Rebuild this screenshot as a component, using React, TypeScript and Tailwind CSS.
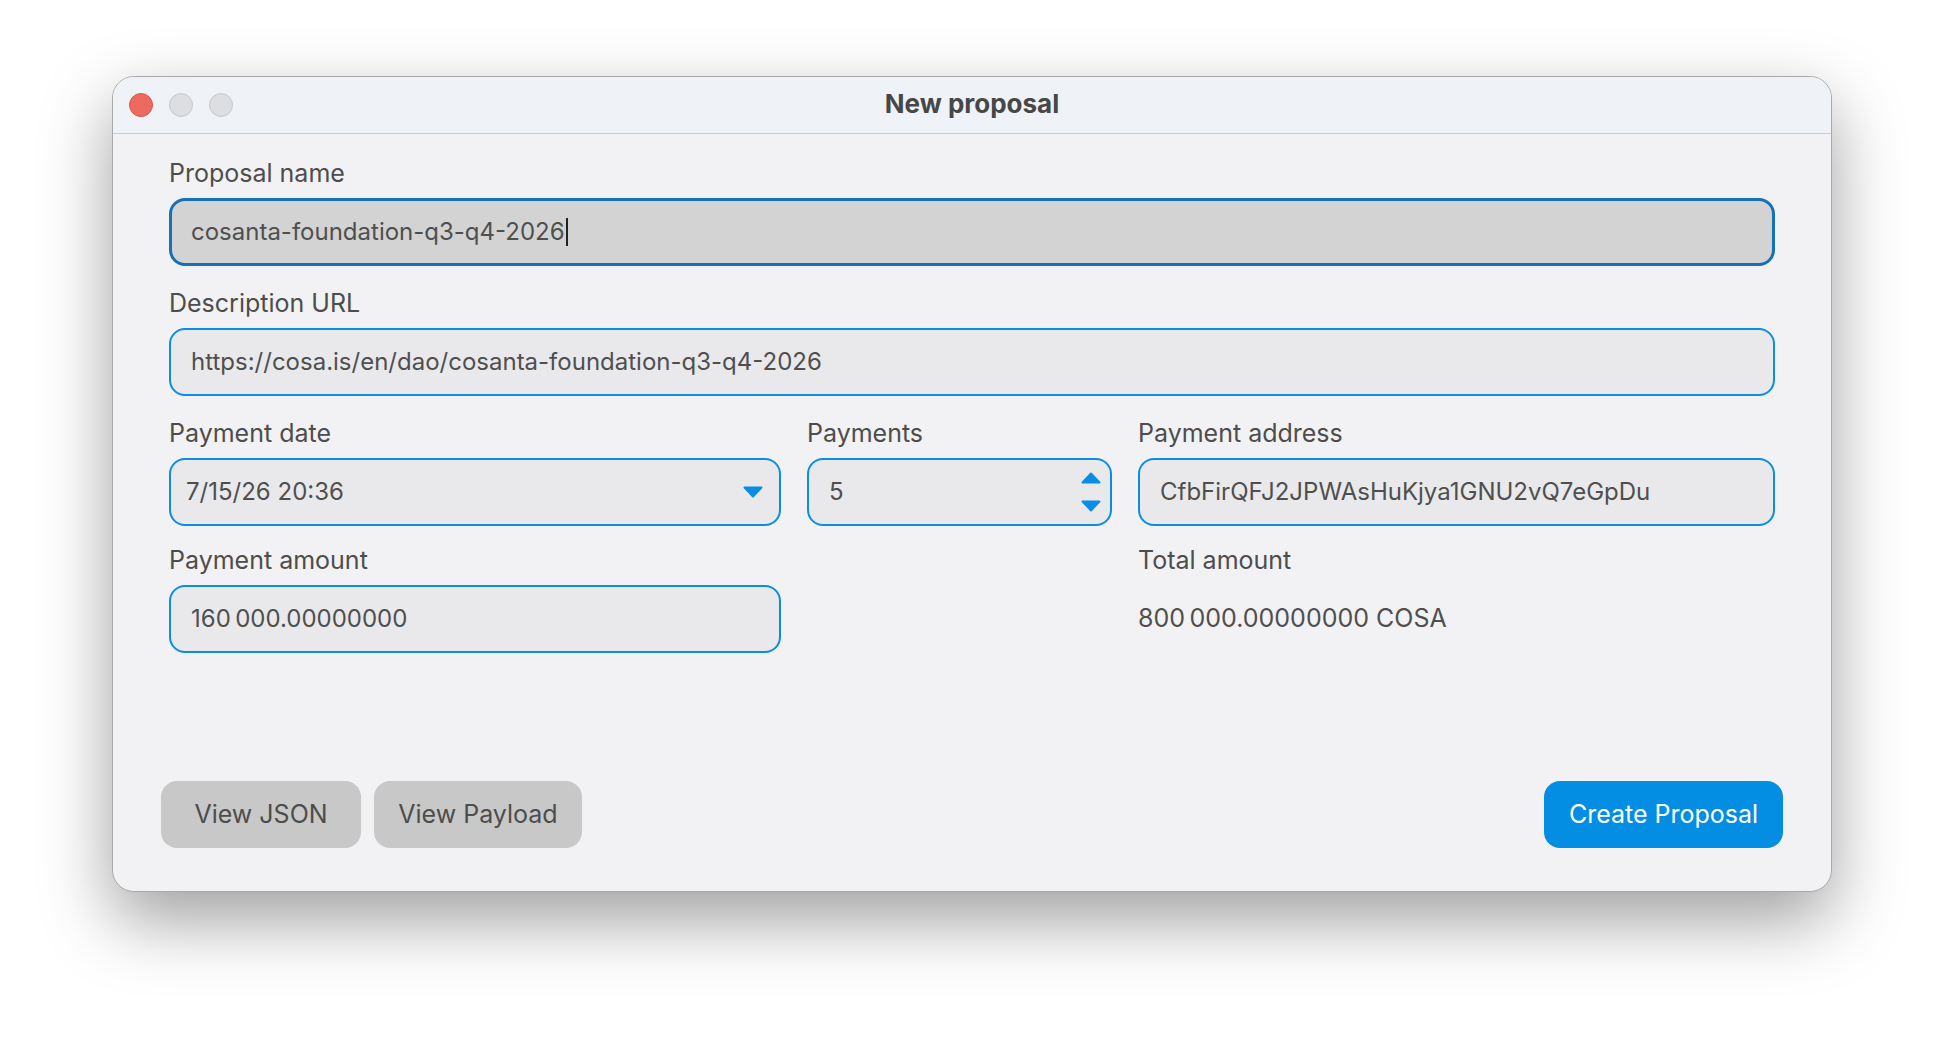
import React from "react";

const font = { fontFamily: "Inter, 'Noto Sans', sans-serif" };

function Label({ children }: { children: React.ReactNode }) {
  return (
    <div className="h-[30px] text-[25px] leading-[30px] text-[#4d4d4d]">
      {children}
    </div>
  );
}

function Field({
  value,
  className = "",
  children,
}: {
  value: string;
  className?: string;
  children?: React.ReactNode;
}) {
  return (
    <div
      className={`mt-[10px] flex h-[68px] items-center rounded-[16px] border-2 border-[#0a8ee4] bg-[#e9e9eb] text-[24px] text-[#4f4f4f] ${className}`}
    >
      <span className="flex-1">{value}</span>
      {children}
    </div>
  );
}

function Triangle({ up = false }: { up?: boolean }) {
  return (
    <svg width="20" height="12" viewBox="0 0 20 12">
      <path
        d={up ? "M10 1.5 L18.5 10.5 L1.5 10.5 Z" : "M1.5 1.5 L18.5 1.5 L10 10.5 Z"}
        fill="#0a8ee4"
        stroke="#0a8ee4"
        strokeWidth="2"
        strokeLinejoin="round"
      />
    </svg>
  );
}

export default function App() {
  return (
    <div className="min-h-[1040px] bg-white pl-[112px] pt-[76px]" style={font}>
      <div className="flex h-[816px] w-[1720px] flex-col overflow-hidden rounded-[22px] border border-[#a9a9a9] bg-[#f2f2f4] shadow-[0_28px_70px_rgba(0,0,0,0.38)]">
        {/* title bar */}
        <div className="relative flex h-[57px] shrink-0 items-center border-b border-[#cdcdcd] bg-[#eff3f7]">
          <div className="flex gap-[16px] pl-[16px]">
            <span className="h-[24px] w-[24px] rounded-full border border-[#d9584c] bg-[#ee6a5e]" />
            <span className="h-[24px] w-[24px] rounded-full border border-[#c5c8cc] bg-[#dcdee1]" />
            <span className="h-[24px] w-[24px] rounded-full border border-[#c5c8cc] bg-[#dcdee1]" />
          </div>
          <div className="absolute inset-0 flex items-center justify-center pb-[4px] text-[26px] font-bold text-[#474747]">
            New proposal
          </div>
        </div>

        {/* form */}
        <div className="flex flex-1 flex-col px-[56px] pt-[24px]">
          <Label>Proposal name</Label>
          <div className="mt-[10px] flex h-[68px] items-center rounded-[16px] border-[3px] border-[#1570b8] bg-[#d3d3d3] pl-[19px] text-[24px] text-[#4f4f4f]">
            cosanta-foundation-q3-q4-2026
            <span className="ml-[1px] h-[28px] w-[2px] bg-[#222]" />
          </div>

          <div className="mt-[22px]">
            <Label>Description URL</Label>
            <Field value="https://cosa.is/en/dao/cosanta-foundation-q3-q4-2026" className="pl-[20px] pr-[18px]" />
          </div>

          <div className="mt-[22px] grid grid-cols-[612px_305px_1fr] gap-x-[26px]">
            <div>
              <Label>Payment date</Label>
              <Field value="7/15/26 20:36" className="pl-[15px] pr-[16px]">
                <Triangle />
              </Field>
            </div>
            <div>
              <Label>Payments</Label>
              <Field value="5" className="pl-[20px] pr-[9px]">
                <div className="flex flex-col gap-[16px]">
                  <Triangle up />
                  <Triangle />
                </div>
              </Field>
            </div>
            <div>
              <Label>Payment address</Label>
              <Field value="CfbFirQFJ2JPWAsHuKjya1GNU2vQ7eGpDu" className="pl-[20px] pr-[18px]" />
            </div>
          </div>

          <div className="mt-[19px] grid grid-cols-[612px_305px_1fr] gap-x-[26px]">
            <div>
              <Label>Payment amount</Label>
              <Field value={"160\u202F000.00000000"} className="pl-[20px] pr-[18px]" />
            </div>
            <div />
            <div>
              <Label>Total amount</Label>
              <div className="mt-[10px] flex h-[68px] items-center text-[25px] text-[#4f4f4f]">
                {"800\u202F000.00000000 COSA"}
              </div>
            </div>
          </div>

          <div className="mt-auto mb-[43px] -mx-[8px] flex items-center gap-[13px]">
            <button className="h-[67px] w-[200px] rounded-[16px] bg-[#c8c8c8] text-[25px] text-[#4d4d4d]">
              View JSON
            </button>
            <button className="h-[67px] w-[208px] rounded-[16px] bg-[#c8c8c8] text-[25px] text-[#4d4d4d]">
              View Payload
            </button>
            <button className="ml-auto h-[67px] w-[239px] rounded-[16px] bg-[#038ee4] text-[25px] text-white">
              Create Proposal
            </button>
          </div>
        </div>
      </div>
    </div>
  );
}
